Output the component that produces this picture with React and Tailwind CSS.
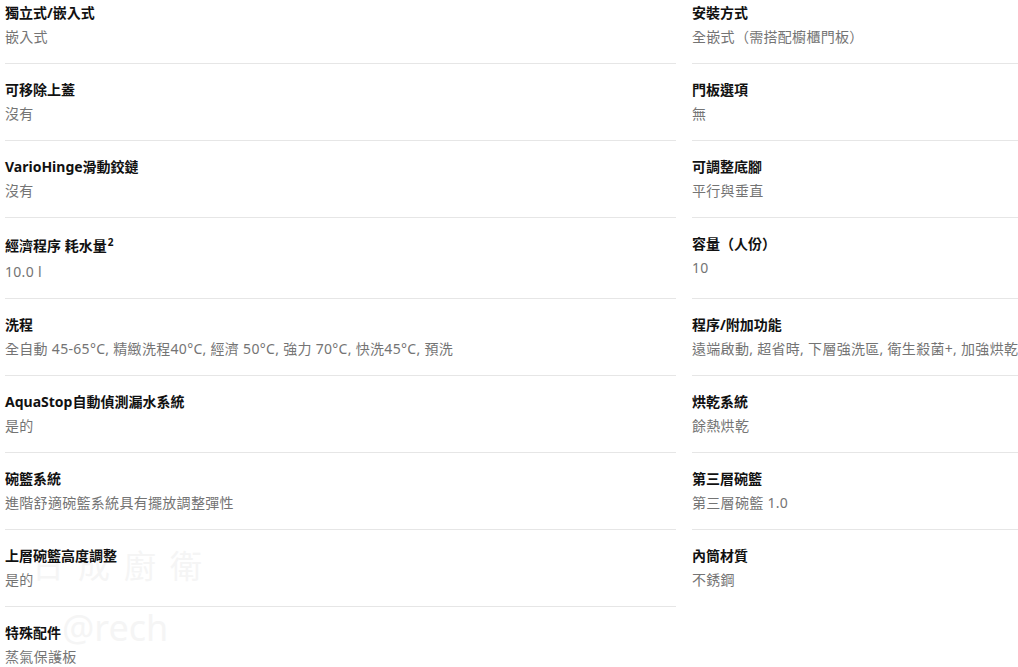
import React from 'react';

const left = [
  { label: '獨立式/嵌入式', value: '嵌入式' },
  { label: '可移除上蓋', value: '沒有' },
  { label: 'VarioHinge滑動鉸鏈', value: '沒有' },
  { label: '經濟程序 耗水量', sup: '2', value: '10.0 l' },
  { label: '洗程', value: '全自動 45-65°C, 精緻洗程40°C, 經濟 50°C, 強力 70°C, 快洗45°C, 預洗' },
  { label: 'AquaStop自動偵測漏水系統', value: '是的' },
  { label: '碗籃系統', value: '進階舒適碗籃系統具有擺放調整彈性' },
  { label: '上層碗籃高度調整', value: '是的' },
  { label: '特殊配件', value: '蒸氣保護板', last: true },
];

const right = [
  { label: '安裝方式', value: '全嵌式（需搭配櫥櫃門板）' },
  { label: '門板選項', value: '無' },
  { label: '可調整底腳', value: '平行與垂直' },
  { label: '容量（人份）', value: '10', tall: true },
  { label: '程序/附加功能', value: '遠端啟動, 超省時, 下層強洗區, 衛生殺菌+, 加強烘乾' },
  { label: '烘乾系統', value: '餘熱烘乾' },
  { label: '第三層碗籃', value: '第三層碗籃 1.0' },
  { label: '內筒材質', value: '不銹鋼', last: true },
];

function SpecRow({ label, sup, value, first, last, tall }) {
  return (
    <div
      className={`${first ? 'pt-px' : 'pt-[14px]'} ${tall ? 'pb-[18px]' : 'pb-[14px]'} ${
        last ? '' : 'border-b border-[#e6e6e6]'
      }`}
    >
      <div
        className={`text-[14px] font-bold text-[#111] whitespace-nowrap ${
          sup ? 'leading-[28px]' : 'leading-[24px]'
        }`}
      >
        {label}
        {sup && <sup className="text-[10px] ml-px">{sup}</sup>}
      </div>
      <div className="text-[14px] leading-[24px] tracking-[0.3px] text-[#747474] whitespace-nowrap">
        {value}
      </div>
    </div>
  );
}

export default function App() {
  return (
    <div
      className="relative w-[1018px] h-[667px] overflow-hidden bg-white"
      style={{ fontFamily: '"Noto Sans", "Noto Sans CJK TC", sans-serif' }}
    >
      {/* watermark */}
      <div className="pointer-events-none absolute left-[32px] top-[550px] text-[32px] leading-none tracking-[14px] text-[#f5f5f5]">
        日成廚衛
      </div>
      <div className="pointer-events-none absolute left-[62px] top-[610px] text-[36px] leading-none text-[#f5f5f5]">
        @rech
      </div>

      <div className="relative grid grid-cols-[671px_1fr] gap-x-4 pl-[5px]">
        <div className="flex flex-col">
          {left.map((r, i) => (
            <SpecRow key={r.label} {...r} first={i === 0} />
          ))}
        </div>
        <div className="flex flex-col">
          {right.map((r, i) => (
            <SpecRow key={r.label} {...r} first={i === 0} />
          ))}
        </div>
      </div>
    </div>
  );
}
